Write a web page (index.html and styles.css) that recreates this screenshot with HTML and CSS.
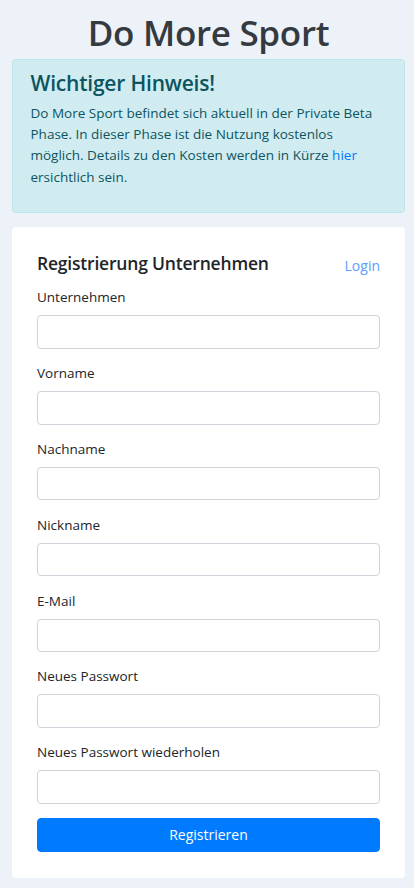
FILE: index.html
```html
<!DOCTYPE html>
<html lang="de">
<head>
<meta charset="utf-8">
<meta name="viewport" content="width=device-width, initial-scale=1">
<title>Do More Sport</title>
<link rel="stylesheet" href="styles.css">
</head>
<body>
<div class="page">
  <h1 class="title">Do More Sport</h1>
  <div class="alert">
    <h4 class="alert-heading">Wichtiger Hinweis!</h4>
    <p class="alert-text">Do More Sport befindet sich aktuell in der Private Beta Phase. In dieser Phase ist die Nutzung kostenlos möglich. Details zu den Kosten werden in Kürze <a href="#" class="link">hier</a> ersichtlich sein.</p>
  </div>
  <div class="card">
    <div class="card-head">
      <h5 class="card-title">Registrierung Unternehmen</h5>
      <a href="#" class="login">Login</a>
    </div>
    <form class="form">
      <div class="group"><label class="label">Unternehmen</label><input class="input" type="text"></div>
      <div class="group"><label class="label">Vorname</label><input class="input" type="text"></div>
      <div class="group"><label class="label">Nachname</label><input class="input" type="text"></div>
      <div class="group"><label class="label">Nickname</label><input class="input" type="text"></div>
      <div class="group"><label class="label">E-Mail</label><input class="input" type="email"></div>
      <div class="group"><label class="label">Neues Passwort</label><input class="input" type="password"></div>
      <div class="group"><label class="label">Neues Passwort wiederholen</label><input class="input" type="password"></div>
      <button type="button" class="btn">Registrieren</button>
    </form>
  </div>
</div>
</body>
</html>
```
FILE: styles.css
```css
* { box-sizing: border-box; }
html, body { margin: 0; padding: 0; }
body {
  background: #edf2f9;
  font-family: "Open Sans", "Noto Sans", sans-serif;
  font-size: 14px;
  line-height: 1.5;
  color: #212529;
}
.page {
  padding: 12px 9px 10px 12px;
}
.title {
  margin: 0 0 5px;
  font-size: 35px;
  font-weight: 600;
  line-height: 42px;
  text-align: center;
  color: #343a40;
  letter-spacing: -0.3px;
}
.alert {
  background: #d1ecf1;
  border: 1px solid #bee5eb;
  border-radius: 4px;
  padding: 10.5px 17.5px;
  color: #0c5460;
  margin-bottom: 14px;
}
.alert-heading {
  margin: 0 0 7px;
  font-size: 21px;
  font-weight: 600;
  line-height: 1.2;
  letter-spacing: -0.2px;
}
.alert-text {
  margin: 0 0 14px;
  font-size: 13.5px;
  line-height: 21.3px;
}
.link { color: #007bff; text-decoration: none; }
.card {
  background: #fff;
  border-radius: 4px;
  padding: 26px 25px 26px;
}
.card-head {
  display: flex;
  justify-content: space-between;
  align-items: flex-start;
  margin-bottom: 11px;
}
.card-title {
  margin: 0;
  font-size: 17.5px;
  font-weight: 600;
  line-height: 21px;
  letter-spacing: -0.2px;
}
.login {
  color: #5c9dff;
  text-decoration: none;
  font-size: 14px;
  line-height: 21px;
  margin-top: 2px;
}
.group { margin-bottom: 14.3px; }
.label {
  display: block;
  margin-bottom: 7px;
  font-size: 13.5px;
  line-height: 21px;
}
.input {
  display: block;
  width: 100%;
  height: 33.5px;
  border: 1px solid #ced4da;
  border-radius: 4px;
  background: #fff;
  padding: 5px 10px;
  font: inherit;
}
.btn {
  display: block;
  width: 100%;
  height: 34px;
  border: 1px solid #007bff;
  border-radius: 4px;
  background: #007bff;
  color: #fff;
  font-family: inherit;
  font-size: 14px;
  margin-top: 0;
}
```
